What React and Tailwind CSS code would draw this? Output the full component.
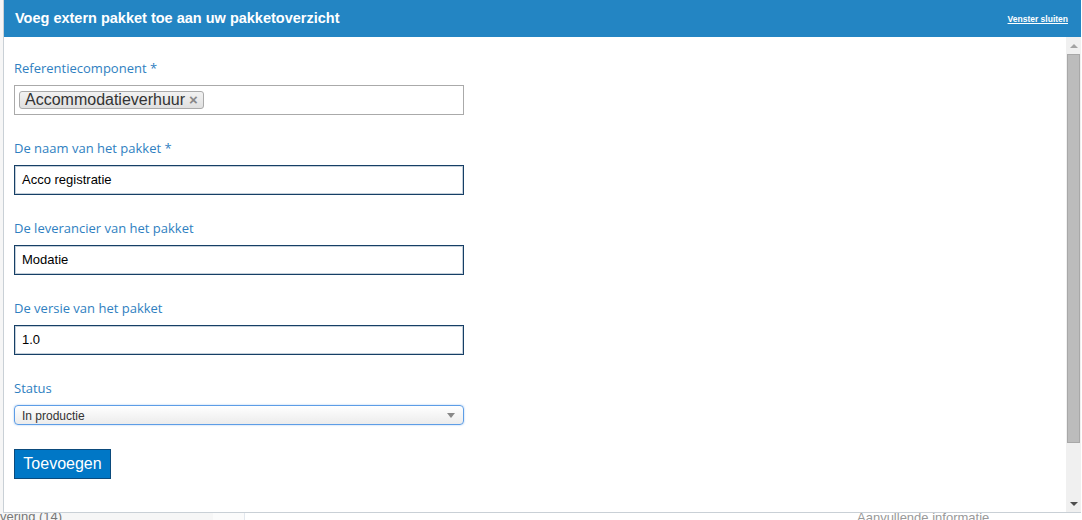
const FIELDS = [
  { label: "De naam van het pakket *", value: "Acco registratie" },
  { label: "De leverancier van het pakket", value: "Modatie" },
  { label: "De versie van het pakket", value: "1.0" },
];

function Label({ children }) {
  return (
    <div className="mb-2 h-[18px] font-['Open_Sans',sans-serif] text-[13px] leading-[18px] text-[#2f7fc1]">
      {children}
    </div>
  );
}

function Scrollbar() {
  return (
    <div className="flex w-[15px] shrink-0 flex-col items-center bg-[#f0f0f0]">
      <div className="flex h-[17px] items-center justify-center">
        <div className="h-0 w-0 border-x-[4px] border-b-[4px] border-x-transparent border-b-[#a3a3a3]" />
      </div>
      <div className="h-[389px] w-[13px] border border-[#a8a8a8] bg-[#bcbcbc]" />
      <div className="flex-1" />
      <div className="flex h-[17px] items-center justify-center">
        <div className="h-0 w-0 border-x-[4px] border-t-[4px] border-x-transparent border-t-[#4f4f4f]" />
      </div>
    </div>
  );
}

export default function App() {
  return (
    <div className="relative h-[520px] w-[1082px] overflow-hidden bg-white font-['Liberation_Sans',Arial,sans-serif]">
      {/* Page behind the dialog */}
      <div className="flex h-full">
        <div className="flex w-[213px] flex-col justify-end bg-[#f6f6f6]">
          <div className="-mb-[6px] text-[13px] text-[#777]">vering (14)</div>
        </div>
        <div className="w-[32px] border-r border-[#e3e8ee] bg-[#fbfbfb]" />
        <div className="flex flex-1 items-end pl-[612px]">
          <div className="-mb-[7px] text-[13px] text-[#999]">Aanvullende informatie</div>
        </div>
      </div>

      {/* Dialog */}
      <div className="absolute left-[3px] top-0 flex h-[513px] w-[1078px] flex-col border-b border-l border-[#c9d0d6] bg-white">
        <div className="flex h-[37px] shrink-0 items-center justify-between bg-[#2385c3] pl-[11px] pr-[13px]">
          <div className="text-[14.5px] font-bold text-white">
            Voeg extern pakket toe aan uw pakketoverzicht
          </div>
          <a className="mt-[1px] text-[8.5px] font-bold text-white underline">Venster sluiten</a>
        </div>

        <div className="flex min-h-0 flex-1">
          <div className="flex-1 pl-[10px] pt-[22px]">
            <div className="mb-[24px] w-[450px]">
              <Label>Referentiecomponent *</Label>
              <div className="flex h-[30px] items-center border border-[#aaaaaa] bg-white pl-[4px]">
                <div className="flex h-[18px] items-center gap-[4px] rounded-[3px] border border-[#aaaaaa] bg-gradient-to-b from-[#f2f2f2] to-[#e0e0e0] pl-[5px] pr-[5px]">
                  <span className="text-[16px] leading-[16px] text-[#333]">Accommodatieverhuur</span>
                  <span className="text-[15px] font-bold leading-[14px] text-[#888]">×</span>
                </div>
              </div>
            </div>

            {FIELDS.map((f) => (
              <div key={f.label} className="mb-[24px] w-[450px]">
                <Label>{f.label}</Label>
                <div className="flex h-[30px] items-center border border-[#163f66] bg-white px-[7px] text-[13px] text-black shadow-[inset_0_0_0_1px_rgba(22,63,102,0.25)]">
                  {f.value}
                </div>
              </div>
            ))}

            <div className="mb-[24px] w-[450px]">
              <Label>Status</Label>
              <div className="mt-[1px] flex h-[20px] items-center justify-between rounded-[4px] border border-[#5d9de6] bg-gradient-to-b from-white to-[#ececec] pl-[7px] pr-[8px] shadow-[0_0_2px_rgba(93,157,230,0.6)]">
                <span className="mt-[2px] text-[12px] text-[#333]">In productie</span>
                <div className="h-0 w-0 border-x-[4px] border-t-[5px] border-x-transparent border-t-[#888]" />
              </div>
            </div>

            <button className="mt-[1px] flex h-[30px] w-[97px] items-center justify-center border border-[#0b4a7c] bg-[#0077c6] text-[16px] text-white">
              Toevoegen
            </button>
          </div>
          <Scrollbar />
        </div>
      </div>
    </div>
  );
}
